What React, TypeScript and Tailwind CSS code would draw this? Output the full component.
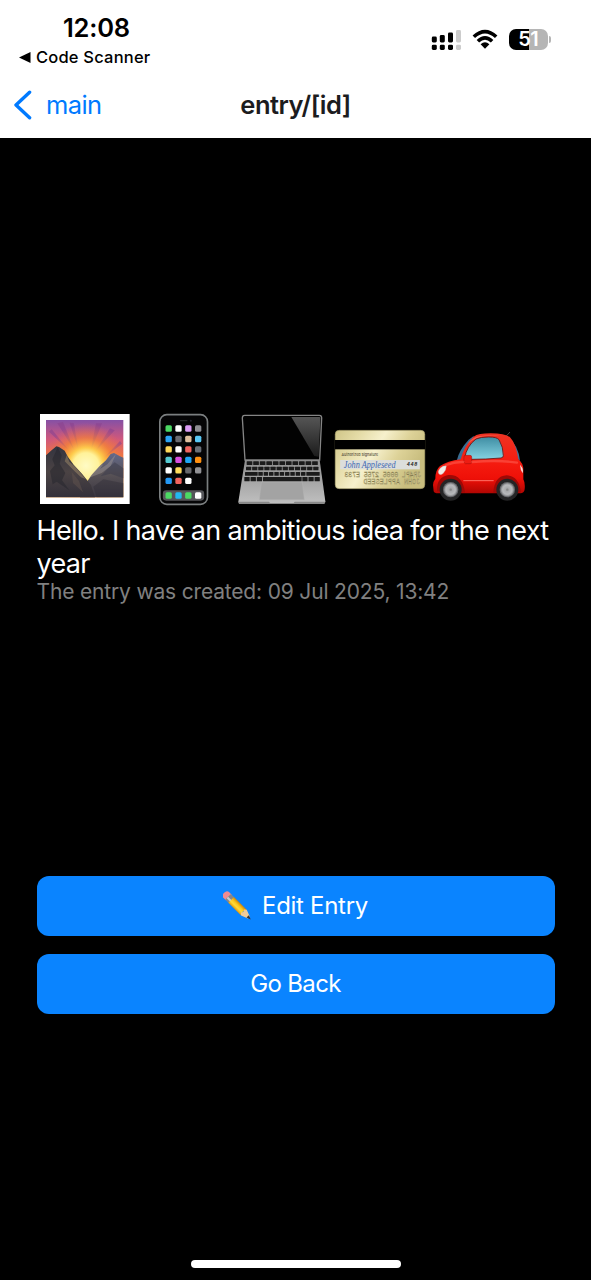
const APP_COLORS = [
  ['#4cd964', '#ffffff', '#dc9cf5', '#8e8e93'],
  ['#2ba4f5', '#6b6b70', '#dfbf9f', '#5ac8f5'],
  ['#ffd95a', '#ffffff', '#f2645f', '#6a7078'],
  ['#55cbd3', '#d84fe0', '#1ea5f5', '#ff9010'],
  ['#ffffff', '#ffdc5c', '#68686c', '#929296'],
  ['#2499f5', '#f2645f', '#ffffff'],
];
const DOCK_COLORS = ['#4cd964', '#22b8f0', '#4cd964', '#ffffff'];

function SunrisePicture() {
  return (
    <svg className="h-[98px] w-[98.5px] shrink-0" viewBox="18 15 295.5 294">
      <defs>
        <linearGradient id="sky" x1="0" y1="0" x2="0" y2="1">
          <stop offset="0" stopColor="#8550a5" />
          <stop offset="0.25" stopColor="#d0587c" />
          <stop offset="0.5" stopColor="#f27a3c" />
          <stop offset="1" stopColor="#ffa02e" />
        </linearGradient>
        <radialGradient id="sun" cx="168" cy="182" r="128" gradientUnits="userSpaceOnUse">
          <stop offset="0" stopColor="#fffbc5" />
          <stop offset="0.3" stopColor="#fff29a" />
          <stop offset="0.42" stopColor="#ffd04c" stopOpacity="0.95" />
          <stop offset="0.66" stopColor="#fb8a2c" stopOpacity="0.6" />
          <stop offset="1" stopColor="#ee6a4a" stopOpacity="0" />
        </radialGradient>
        <linearGradient id="rock" x1="0" y1="0" x2="0" y2="1">
          <stop offset="0" stopColor="#33343f" />
          <stop offset="0.5" stopColor="#4b4344" />
          <stop offset="1" stopColor="#33303a" />
        </linearGradient>
        <linearGradient id="rockRight" x1="0" y1="0" x2="0" y2="1">
          <stop offset="0" stopColor="#62698c" />
          <stop offset="0.45" stopColor="#5a5458" />
          <stop offset="1" stopColor="#393540" />
        </linearGradient>
      </defs>
      <rect x="30" y="27" width="269" height="270" fill="#fff" />
      <rect x="48" y="45" width="232" height="232" fill="url(#sky)" />
      <g fill="#8a4390" opacity="0.6">
        <path d="M82 55l17-4 34 85zM119 53l12 1 15 82zM198 55h18l-34 84zM240 70l14 6-60 66zM57 80l8-7 54 66zM270 108l6 8-57 45z" />
      </g>
      <rect x="48" y="45" width="232" height="232" fill="url(#sun)" />
      <path d="M170 232l15-22 25-28 18-16 14-19 10-3 18 10 10 4v119H150z" fill="url(#rockRight)" />
      <path d="M186 208l22-25 12-5-10 14 22-14 18-22 8-9-16 36-27 21-38 14z" fill="#aaa09a" opacity="0.4" />
      <path d="M236 188l18-16 26 18v30l-38-14-30 8z" fill="#39394a" opacity="0.5" />
      <path d="M48 151l15-14 16-13 8 2 17 11 10 19 17 23 25 27 27 34 12 37H48z" fill="url(#rock)" />
      <path d="M110 150l8 20 17 15 32 37-14-5-19-18-30-30z" fill="#b69d74" opacity="0.4" />
      <path d="M83 127l12 24-6 25 17 28-10 22 22 30-38-26-12 8-8-40 14-17-7-18z" fill="#27262d" opacity="0.55" />
      <path d="M125 200l22 28 12 34-30-28z" fill="#65564f" opacity="0.45" />
      <path d="M190 245l30-22 60 12v42h-80z" fill="#2d2a35" opacity="0.4" />
    </svg>
  );
}

function Phone() {
  return (
    <svg className="h-[98px] w-[98.5px] shrink-0" viewBox="-44.5 15 295.5 294">
      <rect x="30" y="29" width="143" height="269" rx="21" fill="#050506" stroke="#7b7f80" strokeWidth="5" />
      <rect x="90" y="45" width="23" height="4" rx="2" fill="#29292c" />
      <circle cx="123" cy="47" r="3" fill="#252530" />
      {APP_COLORS.map((row, r) =>
        row.map((color, c) => (
          <rect key={`${r}-${c}`} x={47 + c * 29.5} y={61 + r * 31.4} width="19" height="19" rx="4.5" fill={color} />
        )),
      )}
      <rect x="39" y="256" width="124" height="31" rx="10" fill="#55565a" />
      {DOCK_COLORS.map((color, c) => (
        <rect key={c} x={47 + c * 29.5} y="262" width="19" height="19" rx="4.5" fill={color} />
      ))}
    </svg>
  );
}

function Keys({ y, x, width, count, height }: { y: number; x: number; width: number; count: number; height: number }) {
  const pitch = width / count;
  return (
    <>
      {Array.from({ length: count }, (_, i) => (
        <rect key={i} x={x + i * pitch + 1} y={y} width={pitch - 2.6} height={height} rx="1.5" />
      ))}
    </>
  );
}

function Laptop() {
  return (
    <svg className="h-[98px] w-[98.5px] shrink-0" viewBox="9 15 295.5 294">
      <defs>
        <linearGradient id="glare" x1="0" y1="0" x2="0" y2="1">
          <stop offset="0" stopColor="#555" />
          <stop offset="1" stopColor="#1c1c1c" />
        </linearGradient>
        <linearGradient id="deck" x1="0" y1="0" x2="0" y2="1">
          <stop offset="0" stopColor="#8d8d8d" />
          <stop offset="1" stopColor="#c0c0c0" />
        </linearGradient>
      </defs>
      <path d="M44 31h224q7 0 7 8l-6 126H45L37 39q0-8 7-8z" fill="#020202" stroke="#858585" strokeWidth="4" />
      <path d="M184 36h84q3 0 3 4l-5 115-13-2z" fill="url(#glare)" />
      <path d="M45 165h224l17 124q0 8-6 8H31q-6 0-6-7z" fill="url(#deck)" />
      <path d="M94 231h123l6 53H88z" fill="#a3a3a3" stroke="#b4b4b4" strokeWidth="1.5" />
      <path d="M26 290h91l3 4h71l3-4h92q0 7-6 7H31q-5 0-5-7z" fill="#8a8a8a" />
      <g fill="#1b1b1b">
        <Keys x={49} y={169} width={216} count={11} height={11} />
        <Keys x={47} y={185} width={220} count={12} height={11} />
        <rect x="45" y="201" width="38" height="11" rx="1.5" />
        <Keys x={84} y={201} width={144} count={9} height={11} />
        <rect x="229" y="201" width="40" height="11" rx="1.5" />
        <Keys x={42} y={216} width={56} count={3} height={13} />
        <rect x="99" y="216" width="116" height="13" rx="1.5" />
        <Keys x={216} y={216} width={55} count={3} height={13} />
      </g>
    </svg>
  );
}

function CreditCard() {
  return (
    <svg className="h-[98px] w-[98.5px] shrink-0" viewBox="12.5 -30 295.5 294">
      <defs>
        <linearGradient id="gold" x1="0" y1="0" x2="1" y2="0.4">
          <stop offset="0" stopColor="#cfc588" />
          <stop offset="0.25" stopColor="#e4dba6" />
          <stop offset="0.5" stopColor="#f6f0cc" />
          <stop offset="0.75" stopColor="#ddd298" />
          <stop offset="1" stopColor="#c8bd7e" />
        </linearGradient>
      </defs>
      <rect x="22" y="31" width="269" height="175" rx="12" fill="url(#gold)" stroke="#9b9260" strokeWidth="1.5" />
      <rect x="21" y="60" width="271" height="28" fill="#000" />
      <text x="41" y="109" textLength="110" lengthAdjust="spacingAndGlyphs" fill="#554f3a" className="font-['Inter',sans-serif] text-[12px] font-medium">
        Authorized Signature
      </text>
      <rect x="37" y="120" width="239" height="28" fill="#dcdedb" />
      <text x="48" y="145" textLength="155" lengthAdjust="spacingAndGlyphs" fill="#3d67b2" className="font-['Liberation_Serif',serif] text-[29px] italic">
        John Appleseed
      </text>
      <text x="237" y="138" textLength="31" fill="#292929" className="font-['Inter',sans-serif] text-[14px] font-bold italic">
        448
      </text>
      <g fill="#f1e9bc" stroke="#857b4d" strokeWidth="1" className="font-['Liberation_Mono',monospace] text-[20px]">
        <text transform="matrix(-1 0 0 1 280 170)" textLength="230">JR4PL 0005 2755 E733</text>
        <text transform="matrix(-1 0 0 1 277 192)" textLength="170">JOHN APPLESEED</text>
      </g>
    </svg>
  );
}

function Wheel({ cx }: { cx: number }) {
  return (
    <g>
      <circle cx={cx} cy="209" r="33" fill="#242425" />
      <circle cx={cx} cy="209" r="23" fill="#67686b" />
      <circle cx={cx} cy="209" r="20" fill="url(#hub)" />
      <circle cx={cx} cy="209" r="3.5" fill="#888" />
    </g>
  );
}

function Car() {
  return (
    <svg className="h-[98px] w-[98.5px] shrink-0" viewBox="6 -30 295.5 294">
      <defs>
        <linearGradient id="paint" x1="0" y1="0" x2="0" y2="1">
          <stop offset="0" stopColor="#ee3424" />
          <stop offset="0.48" stopColor="#f51c10" />
          <stop offset="0.75" stopColor="#ef1008" />
          <stop offset="1" stopColor="#b00602" />
        </linearGradient>
        <linearGradient id="glass" x1="0" y1="0" x2="0" y2="1">
          <stop offset="0" stopColor="#3f8da3" />
          <stop offset="1" stopColor="#85d3e2" />
        </linearGradient>
        <radialGradient id="hub">
          <stop offset="0" stopColor="#a0a1a3" />
          <stop offset="0.7" stopColor="#b9babc" />
          <stop offset="1" stopColor="#858689" />
        </radialGradient>
      </defs>
      <path d="M233 50l13-14" stroke="#444" strokeWidth="3" />
      <path d="M86 122q7-32 36-63l16-12-30 75z" fill="#3a6c91" />
      <path d="M243 54q28 23 33 68l-13-8z" fill="#416f95" />
      <path d="M17 214l-2-19q0-10 7-19 0-26 14-38 22-15 62-20 11-42 39-68 14-10 51-10 42 0 58 12 17 17 25 66 15 12 15 31v29q6 10 4 30-1 10-11 12H30q-11 0-13-6z" fill="url(#paint)" />
      <path d="M118 72q18-22 38-24 34-5 61 0-34-3-58 2-22 6-41 22z" fill="#ff7768" opacity="0.6" />
      <path d="M110 114q6-36 34-57 14-6 38-6 25 0 31 8 13 22 13 48 0 6-7 7-45 4-92 4-17 1-17-4z" fill="url(#glass)" stroke="#631513" strokeWidth="2.5" />
      <path d="M108 112v-2q0-4 4-4h14q5 0 5 5v15q0 5-4 5h-15q-6-2-4-19z" fill="#ed1d13" stroke="#a10c08" strokeWidth="1.5" />
      <path d="M55 135q25-10 51-9M133 126q78-7 134 2" fill="none" stroke="#ff655a" strokeWidth="7" strokeLinecap="round" opacity="0.5" />
      <path d="M34 163q-8-7 3-19 9-8 18-6 0 12-9 22-6 6-12 3z" fill="#f1ece9" stroke="#bba6a3" />
      <path d="M276 134q8 8 9 18l-1 8q-7-10-8-26z" fill="#f4dedb" />
      <path d="M27 214q-2-43 34-49 43-3 50 53zM196 218q3-50 40-52 36 0 43 51z" fill="#9d0906" />
      <path d="M106 182h91" stroke="#ff7166" strokeWidth="3" />
      <Wheel cx={68} />
      <Wheel cx={238} />
    </svg>
  );
}

function Pencil() {
  return (
    <svg className="h-[30px] w-[30px]" viewBox="25 15 90 90">
      <defs>
        <linearGradient id="wood" x1="0" y1="0" x2="1" y2="0">
          <stop offset="0" stopColor="#e49a0d" />
          <stop offset="0.35" stopColor="#ffdb3b" />
          <stop offset="0.65" stopColor="#fbc41b" />
          <stop offset="1" stopColor="#c98310" />
        </linearGradient>
      </defs>
      <g transform="translate(29 21) rotate(-45)">
        <path d="M-12 19V9Q-12-1 0-1t12 10v10z" fill="#f28b91" />
        <rect x="-12" y="16" width="24" height="15" fill="#84878c" />
        <rect x="-6" y="16" width="6" height="15" fill="#c9ccd0" />
        <path d="M-12 29h24v54l-12-4-12 4z" fill="url(#wood)" />
        <path d="M-12 83l5-6 7 4 7-4 5 6-8 21h-8z" fill="#f2cc98" />
        <path d="M-5 99h10l-5 13z" fill="#383434" />
      </g>
    </svg>
  );
}

function StatusIcons() {
  return (
    <div className="flex h-[24px] items-center">
      <svg className="h-[22px] w-[30px]" viewBox="0 0 30 22">
        <g fill="#000">
          <rect x="0.8" y="8.5" width="5" height="6" rx="1.4" />
          <rect x="8.8" y="7" width="5" height="7.5" rx="1.4" />
          <rect x="17" y="4.5" width="5" height="10" rx="1.4" />
          <rect x="0.8" y="16.7" width="5" height="5.3" rx="1.4" />
          <rect x="8.8" y="16.7" width="5" height="5.3" rx="1.4" />
          <rect x="17" y="16.7" width="5" height="5.3" rx="1.4" />
        </g>
        <g fill="#ccc">
          <rect x="25" y="2" width="5" height="12.5" rx="1.4" />
          <rect x="25" y="16.7" width="5" height="5.3" rx="1.4" />
        </g>
      </svg>
      <svg className="ml-[11px] h-[20px] w-[26px]" viewBox="0 0 26 20">
        <g fill="none" stroke="#000" strokeWidth="3.6">
          <path d="M1.8 7.8Q13-2.6 24.2 7.8" />
          <path d="M5.9 12.2Q13 5.4 20.1 12.2" />
        </g>
        <path d="M8.6 15.2Q13 11.4 17.4 15.2L13 19.7z" />
      </svg>
      <div className="ml-[11px] flex h-[21px] w-[38.5px] items-center justify-center rounded-[7px] bg-[linear-gradient(90deg,#000_51%,#b5b5b5_51%)] text-[20px] font-semibold leading-none tracking-[-0.6px] text-white">
        51
      </div>
      <div className="ml-[1.5px] h-[7px] w-[2px] rounded-r-full bg-[#b5b5b5]" />
    </div>
  );
}

export default function App() {
  return (
    <div className="flex h-[1280px] w-[591px] flex-col overflow-hidden bg-black font-['Inter','Liberation_Sans',sans-serif]">
      <header className="h-[138px] shrink-0 bg-white text-black">
        <div className="flex h-[72px] justify-between pl-[19px] pr-[40px]">
          <div className="pt-[13px]">
            <div className="pl-[44px] text-[25.5px] font-semibold leading-[30px] tracking-[-0.2px]">12:08</div>
            <div className="flex h-[28px] items-center">
              <svg className="h-[11px] w-[12px]" viewBox="0 0 12 11">
                <path d="M0 5.5L11.5 0v11z" />
              </svg>
              <span className="ml-[5px] whitespace-nowrap text-[16.5px] font-medium tracking-[0.2px]">Code Scanner</span>
            </div>
          </div>
          <div className="pt-[27px]">
            <StatusIcons />
          </div>
        </div>
        <div className="grid h-[66px] grid-cols-[1fr_auto_1fr] items-center px-[14px]">
          <div className="flex items-center text-[#007aff]">
            <svg className="h-[30px] w-[18px]" viewBox="0 0 18 30">
              <path d="M15.6 2.2L2 15l13.6 12.8" fill="none" stroke="currentColor" strokeWidth="3.4" strokeLinecap="round" strokeLinejoin="round" />
            </svg>
            <span className="ml-[14px] text-[25.5px] tracking-[-0.6px]">main</span>
          </div>
          <h1 className="text-[25.5px] font-semibold tracking-[-0.5px] text-[#1c1c1e]">entry/[id]</h1>
        </div>
      </header>

      <main className="flex flex-1 flex-col px-[36.5px] pt-[272px]">
        <div className="-ml-[0.5px] flex h-[105px]">
          <SunrisePicture />
          <Phone />
          <Laptop />
          <CreditCard />
          <Car />
        </div>
        <p className="whitespace-nowrap text-[27px] leading-[32.5px] tracking-[-0.69px] text-white">
          Hello. I have an ambitious idea for the next
          <br />
          year
        </p>
        <p className="-mt-[1px] whitespace-nowrap text-[21px] leading-[25px] tracking-[-0.17px] text-[#808080]">
          The entry was created: 09 Jul 2025, 13:42
        </p>
        <div className="mt-[272px] flex flex-col gap-[18px]">
          <button className="flex h-[60px] items-center justify-center gap-[9px] rounded-[12px] bg-[#0a84ff] text-[24px] text-white">
            <Pencil />
            <span className="tracking-[-0.3px]">Edit Entry</span>
          </button>
          <button className="flex h-[60px] items-center justify-center rounded-[12px] bg-[#0a84ff] text-[24px] text-white">
            <span className="tracking-[-0.65px]">Go Back</span>
          </button>
        </div>
      </main>

      <footer className="flex h-[20px] shrink-0 justify-center">
        <div className="h-[8px] w-[210px] rounded-full bg-white" />
      </footer>
    </div>
  );
}
